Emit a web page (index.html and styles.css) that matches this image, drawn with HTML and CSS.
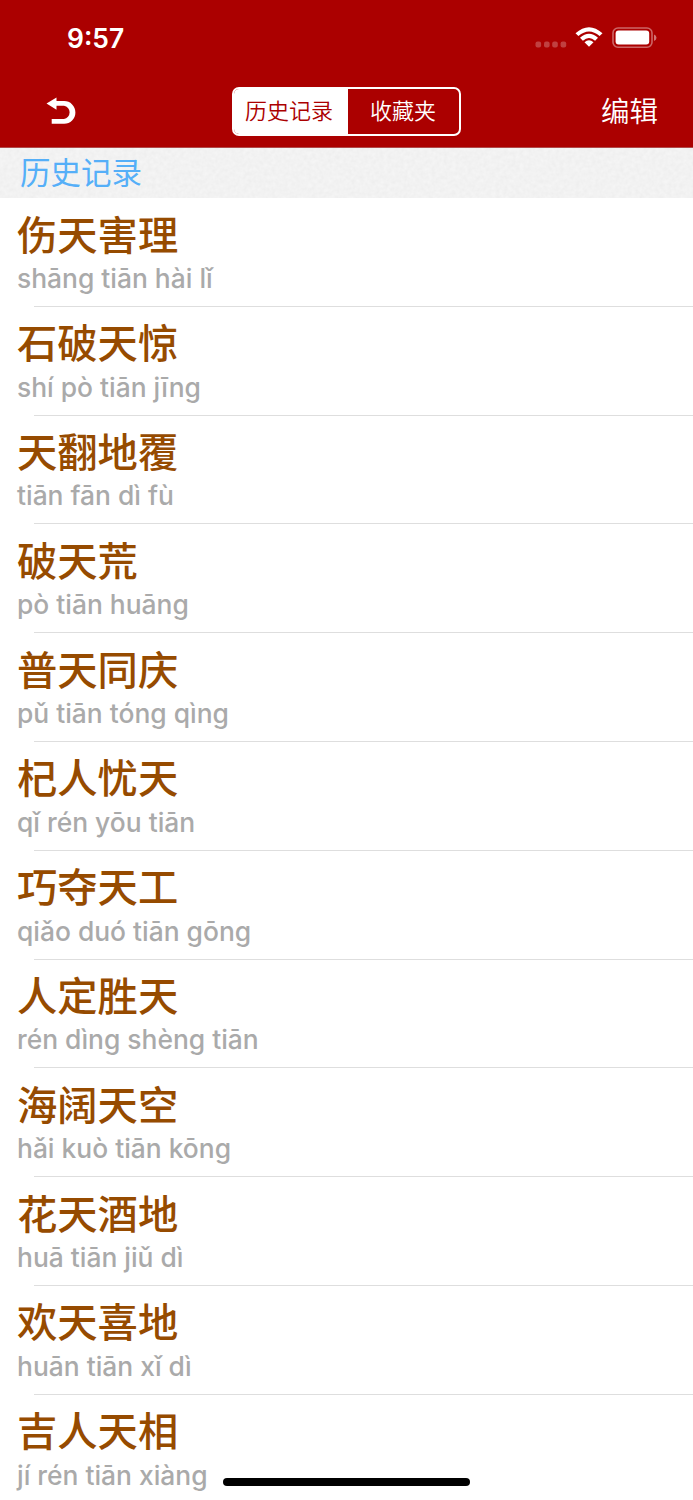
FILE: index.html
```html
<!DOCTYPE html>
<html lang="zh-CN">
<head>
    <meta charset="UTF-8">
    <meta name="viewport" content="width=device-width, initial-scale=1.0">
    <title>历史记录</title>
    <link rel="stylesheet" href="styles.css">
</head>
<body>
    <header>
        <div class="status-bar">
            <span class="time">9:57</span>
            <div class="status-icons">
                <svg class="signal" width="32" height="7" viewBox="0 0 32 7">
                    <rect x="0.5" y="0.5" width="5.6" height="6" rx="2"/>
                    <rect x="9" y="0.5" width="5.6" height="6" rx="2"/>
                    <rect x="17.2" y="0.5" width="5.6" height="6" rx="2"/>
                    <rect x="25.6" y="0.5" width="5.6" height="6" rx="2"/>
                </svg>
                <svg class="wifi" width="28" height="20" viewBox="0 0 28 20">
                    <path d="M0.5 6.2Q14-5.8 27.5 6.2L24.6 9.1Q14-0.2 3.4 9.1Z"/>
                    <path d="M5 10.8Q14 2.8 23 10.8L20.1 13.7Q14 8.4 7.9 13.7Z"/>
                    <path d="M9.5 15.3Q14 11.4 18.5 15.3L14 19.8Z"/>
                </svg>
                <svg class="battery" width="46" height="22" viewBox="0 0 46 22">
                    <rect class="battery-case" x="1" y="1" width="39" height="19.2" rx="5"/>
                    <rect x="3.6" y="3.6" width="33.6" height="14" rx="3"/>
                    <path class="battery-tip" d="M42 7.5Q44.5 8.5 44.5 10.7T42 14Z"/>
                </svg>
            </div>
        </div>
        <nav>
            <a class="back">
                <svg width="30" height="28" viewBox="0 0 30 28">
                    <path d="M0 6.6L10 0.5V4.1H17.7A11.2 11.3 0 0 1 17.7 26.7H5.2V21.9H17.5A6.4 6.6 0 0 0 17.5 8.8H10V12.7Z"/>
                </svg>
            </a>
            <div class="tabs">
                <a class="tab active">历史记录</a>
                <a class="tab">收藏夹</a>
            </div>
            <a class="edit">编辑</a>
        </nav>
    </header>

    <h2 class="section-title">
        <svg class="paper" width="693" height="50">
            <filter id="grain" x="0" y="0" width="100%" height="100%" color-interpolation-filters="sRGB">
                <feTurbulence type="fractalNoise" baseFrequency="0.25" numOctaves="3" result="noise"/>
                <feColorMatrix type="matrix" values="0.04 0 0 0 0.928  0.04 0 0 0 0.928  0.04 0 0 0 0.928  0 0 0 0 1"/>
            </filter>
            <rect width="693" height="50" filter="url(#grain)"/>
        </svg>
        <span>历史记录</span>
    </h2>

    <ul class="list">
        <li><div class="word">伤天害理</div><div class="pinyin">shāng tiān hài lǐ</div></li>
        <li><div class="word">石破天惊</div><div class="pinyin">shí pò tiān jīng</div></li>
        <li><div class="word">天翻地覆</div><div class="pinyin">tiān fān dì fù</div></li>
        <li><div class="word">破天荒</div><div class="pinyin">pò tiān huāng</div></li>
        <li><div class="word">普天同庆</div><div class="pinyin">pǔ tiān tóng qìng</div></li>
        <li><div class="word">杞人忧天</div><div class="pinyin">qǐ rén yōu tiān</div></li>
        <li><div class="word">巧夺天工</div><div class="pinyin">qiǎo duó tiān gōng</div></li>
        <li><div class="word">人定胜天</div><div class="pinyin">rén dìng shèng tiān</div></li>
        <li><div class="word">海阔天空</div><div class="pinyin">hǎi kuò tiān kōng</div></li>
        <li><div class="word">花天酒地</div><div class="pinyin">huā tiān jiǔ dì</div></li>
        <li><div class="word">欢天喜地</div><div class="pinyin">huān tiān xǐ dì</div></li>
        <li><div class="word">吉人天相</div><div class="pinyin">jí rén tiān xiàng</div></li>
    </ul>

    <div class="home-indicator"></div>
</body>
</html>
```
FILE: styles.css
```css
* {
    box-sizing: border-box;
}
body {
    font-family: Inter, "Noto Sans CJK SC", sans-serif;
    margin: 0;
    height: 1500px;
    overflow: hidden;
    background-color: #fff;
}
header {
    height: 148px;
    background-color: #ab0000;
    color: #fff;
    border-bottom: 1px solid #b04a4a;
}
svg {
    display: block;
    fill: #fff;
}
.status-bar {
    display: flex;
    justify-content: space-between;
    height: 75px;
    padding: 0 35px 0 67px;
}
.time {
    font-size: 26.4px;
    font-weight: 600;
    line-height: 32px;
    padding-top: 22px;
}
.status-icons {
    display: flex;
    align-items: flex-start;
    padding-top: 27px;
}
.signal {
    margin: 14px 8px 0 0;
    opacity: 0.25;
}
.wifi {
    margin-right: 9px;
}
.battery-case {
    fill: none;
    stroke: #fff;
    stroke-width: 1.6;
    opacity: 0.4;
}
.battery-tip {
    opacity: 0.45;
}
nav {
    display: grid;
    grid-template-columns: 1fr 229px 1fr;
    align-items: center;
    height: 72px;
    padding: 0 35px 0 46px;
}
.back svg {
    width: 31px;
    height: 28px;
}
.tabs {
    display: flex;
    width: 229px;
    height: 49px;
    margin-left: -6px;
    border: 2px solid #fff;
    border-radius: 7px;
    overflow: hidden;
}
.tab {
    flex: 1;
    font-size: 22px;
    font-weight: 350;
    line-height: 45px;
    text-align: center;
}
.tab.active {
    flex: 0 0 114px;
    padding-right: 3px;
    background-color: #fff;
    color: #ab0000;
}
.edit {
    margin-top: -3px;
    font-size: 28.5px;
    font-weight: 350;
    text-align: right;
}
.section-title {
    position: relative;
    height: 50px;
    margin: 0;
    padding-left: 20px;
    color: #55aff8;
    font-size: 30.5px;
    font-weight: 400;
    line-height: 50px;
}
.section-title span {
    position: relative;
}
.paper {
    position: absolute;
    top: 0;
    left: 0;
}
.list {
    list-style: none;
    margin: 0;
    padding: 0;
}
.list li {
    height: 108.8px;
    padding: 13.5px 0 0 17px;
    background: linear-gradient(#dedede, #dedede) 34px 100% / 100% 1px no-repeat;
}
.list li:last-child {
    background: none;
}
.word {
    color: #964b00;
    font-size: 40.3px;
    font-weight: 500;
    line-height: 48px;
}
.pinyin {
    margin-top: 0.4px;
    color: #aaa;
    font-size: 26.4px;
    font-weight: 500;
    line-height: 36px;
}
.home-indicator {
    position: absolute;
    left: 223px;
    bottom: 14px;
    width: 247px;
    height: 8px;
    border-radius: 4px;
    background-color: #000;
}
```
